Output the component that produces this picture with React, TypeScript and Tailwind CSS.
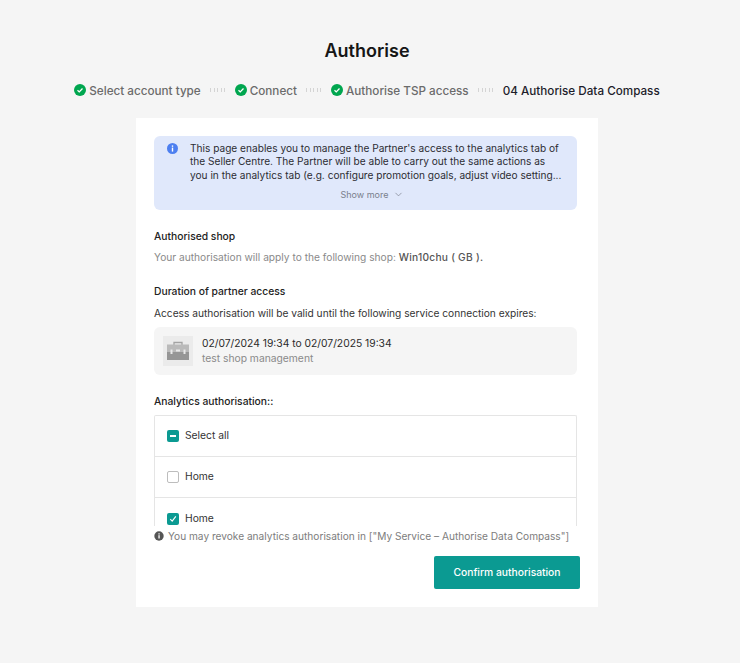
import { ChevronDown } from "lucide-react";

const font = "font-['Inter','Noto_Sans',sans-serif]";

function StepCheck() {
	return (
		<svg width="12" height="12" viewBox="0 0 13 13" className="-mt-[2px] shrink-0">
			<circle cx="6.5" cy="6.5" r="6.5" fill="#00a64f" />
			<path d="M3.8 6.7l1.9 1.8 3.5-3.6" fill="none" stroke="#fff" strokeWidth="1.4" />
		</svg>
	);
}

function Dots() {
	return (
		<div className="mx-[9.5px] -mt-[2px] flex items-center gap-[2.5px]">
			<span className="h-[4px] w-[1px] bg-[#d4d4d4]" />
			<span className="h-[4px] w-[1px] bg-[#d4d4d4]" />
			<span className="h-[4px] w-[1px] bg-[#d4d4d4]" />
			<span className="h-[4px] w-[1px] bg-[#d4d4d4]" />
			<span className="h-[4px] w-[1px] bg-[#d4d4d4]" />
		</div>
	);
}

function Step({ label }: { label: string }) {
	return (
		<div className="flex items-center gap-[3px]">
			<StepCheck />
			<span className="text-[11.7px] leading-[16px] font-medium text-[#6b6b6b]">{label}</span>
		</div>
	);
}

function Briefcase() {
	return (
		<div className="flex size-[30px] shrink-0 items-center justify-center bg-[#ebebeb]">
			<svg width="22" height="20" viewBox="0 0 22 20">
				<path d="M7 4V1.5h8V4" fill="none" stroke="#a3a3a3" strokeWidth="1.3" />
				<rect x="0" y="3.5" width="22" height="7.5" fill="#bababa" />
				<rect x="0" y="11" width="22" height="8" fill="#969696" />
				<rect x="3.5" y="8.5" width="2" height="4.5" fill="#e8e8e8" />
				<rect x="16.5" y="8.5" width="2" height="4.5" fill="#e8e8e8" />
				<rect x="9" y="8.5" width="4" height="2" fill="#e8e8e8" />
			</svg>
		</div>
	);
}

function Row({ label, state, last }: { label: string; state: "some" | "none" | "all"; last?: boolean }) {
	return (
		<div className={`flex h-[41px] shrink-0 items-center gap-[6px] px-[12px] ${last ? "" : "border-b border-[#e5e5e5]"}`}>
			{state === "some" && (
				<span className="flex size-[12px] items-center justify-center rounded-[2px] bg-[#0b9a92]">
					<span className="h-[2px] w-[6px] bg-white" />
				</span>
			)}
			{state === "none" && <span className="size-[12px] rounded-[2px] border border-[#bdbdbd] bg-white" />}
			{state === "all" && (
				<span className="flex size-[12px] items-center justify-center rounded-[2px] bg-[#0b9a92]">
					<svg width="8" height="8" viewBox="0 0 8 8">
						<path d="M1.3 4.2l1.9 2L6.8 1.4" fill="none" stroke="#fff" strokeWidth="1.1" />
					</svg>
				</span>
			)}
			<span className="text-[10.3px] text-[#333333]">{label}</span>
		</div>
	);
}

export default function App() {
	return (
		<div className={`flex h-[663px] flex-col items-center overflow-hidden bg-[#f5f5f5] pt-[40px] pr-[6px] ${font}`}>
			<h1 className="text-[18px] leading-[22px] font-semibold text-[#161616]">Authorise</h1>

			<div className="mt-[21px] flex h-[16px] items-center">
				<Step label="Select account type" />
				<Dots />
				<Step label="Connect" />
				<Dots />
				<Step label="Authorise TSP access" />
				<Dots />
				<span className="text-[11.7px] leading-[16px] font-medium text-[#1d1d2b]">04 Authorise Data Compass</span>
			</div>

			<main className="mt-[19px] flex h-[489px] w-[462px] flex-col bg-white pt-[18px] pr-[18px] pl-[18px]">
				<section className="flex h-[74px] w-[423px] shrink-0 gap-[12px] rounded-[6px] bg-[#e0e8fb] pt-[6px] pl-[13px]">
					<svg width="11" height="11" viewBox="0 0 11 11" className="mt-[1px] shrink-0">
						<circle cx="5.5" cy="5.5" r="5.5" fill="#4d7ff0" />
						<rect x="4.8" y="4.6" width="1.4" height="4" fill="#fff" />
						<rect x="4.8" y="2.4" width="1.4" height="1.4" fill="#fff" />
					</svg>
					<div className="flex w-[384px] flex-col">
						<p className="text-[10.15px] leading-[13.3px] whitespace-nowrap text-[#2d2d33]">
							This page enables you to manage the Partner's access to the analytics tab of
							<br />
							the Seller Centre. The Partner will be able to carry out the same actions as
							<br />
							you in the analytics tab (e.g. configure promotion goals, adjust video setting...
						</p>
						<div className="mt-[7px] flex items-center justify-center gap-[4px] pr-[20px] text-[9px] leading-[12px] text-[#7a7f8c]">
							<span>Show more</span>
							<ChevronDown size={11} strokeWidth={1.5} />
						</div>
					</div>
				</section>

				<h2 className="mt-[19px] text-[10.3px] leading-[14px] font-medium text-[#222222]">Authorised shop</h2>
				<p className="mt-[7px] text-[10.2px] leading-[14px] whitespace-nowrap text-[#8a8a8a]">
					Your authorisation will apply to the following shop: <span className="font-medium tracking-[0.25px] text-[#555555]">Win10chu ( GB ).</span>
				</p>

				<h2 className="mt-[20px] text-[10.3px] leading-[14px] font-medium text-[#222222]">Duration of partner access</h2>
				<p className="mt-[8px] text-[10.18px] leading-[14px] whitespace-nowrap text-[#333333]">Access authorisation will be valid until the following service connection expires:</p>

				<div className="mt-[7px] flex h-[48px] w-[423px] shrink-0 items-center gap-[9px] rounded-[6px] bg-[#f5f5f5] pl-[9px]">
					<Briefcase />
					<div>
						<div className="text-[10.3px] leading-[15px] text-[#2a2a2a]">02/07/2024 19:34 to 02/07/2025 19:34</div>
						<div className="text-[10.3px] leading-[15px] text-[#8a8a8a]">test shop management</div>
					</div>
				</div>

				<h2 className="mt-[19px] text-[10.3px] leading-[14px] font-medium text-[#222222]">Analytics authorisation::</h2>

				<div className="mt-[7px] flex h-[111px] w-[423px] shrink-0 flex-col overflow-hidden rounded-t-[2px] border-x border-t border-[#e5e5e5]">
					<Row label="Select all" state="some" />
					<Row label="Home" state="none" />
					<Row label="Home" state="all" last />
				</div>

				<div className="mt-[3px] flex items-center gap-[4px] text-[10.15px] leading-[14px] whitespace-nowrap text-[#7d7d7d]">
					<svg width="10" height="10" viewBox="0 0 10 10" className="shrink-0">
						<circle cx="5" cy="5" r="4.7" fill="#555555" />
						<rect x="4.4" y="4.2" width="1.3" height="3.3" fill="#fff" />
						<rect x="4.4" y="2.3" width="1.3" height="1.2" fill="#fff" />
					</svg>
					<span>You may revoke analytics authorisation in ["My Service – Authorise Data Compass"]</span>
				</div>

				<div className="mt-[13px] flex w-[426px] justify-end">
					<button className="h-[33px] w-[146px] rounded-[2px] bg-[#0b9a92] text-[10.3px] font-medium text-white">Confirm authorisation</button>
				</div>
			</main>
		</div>
	);
}
